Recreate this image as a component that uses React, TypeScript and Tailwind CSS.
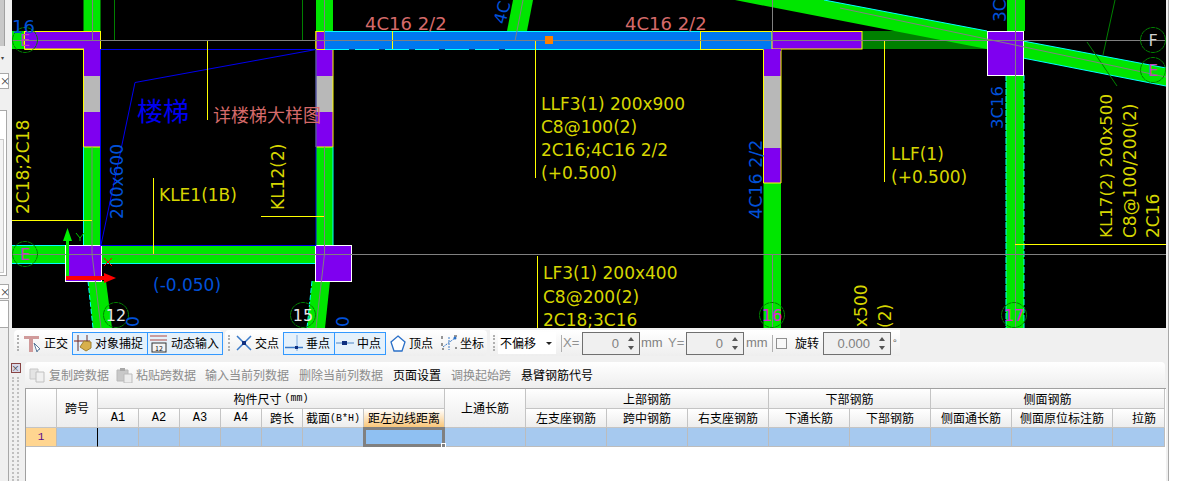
import React from "react";

const cjk = '"Noto Sans CJK SC", sans-serif';
const latin = { fontFamily: '"Liberation Sans", sans-serif' };
const mono = { fontFamily: '"Liberation Mono", "Noto Sans CJK SC", monospace' };
const YELLOW = "#d6d600";
const SALMON = "#d56a6a";
const BLUE = "#0050d8";
const GREEN = "#00e600";
const PURPLE = "#7f00f0";
const CYAN = "#00ffff";

function VText({ x, y, size = 17, fill = YELLOW, angle = -90, children }: { x: number; y: number; size?: number; fill?: string; angle?: number; children: React.ReactNode }) {
  return (
    <text x={x} y={y} fontSize={size} fill={fill} transform={`rotate(${angle} ${x} ${y})`}>
      {children}
    </text>
  );
}

function Axis({ x, y, label, color = "#c040c0" }: { x: number; y: number; label: string; color?: string }) {
  return (
    <g>
      <circle cx={x} cy={y} r="12.5" fill="none" stroke="#008000" strokeDasharray="5 0.6" />
      <text x={x} y={y + 6} fontSize="16" fill={color} textAnchor="middle">
        {label}
      </text>
    </g>
  );
}

function Drawing() {
  return (
    <svg className="block w-[1154px] h-[328px] bg-black" viewBox="12 0 1154 328" style={{ fontFamily: '"DejaVu Sans", sans-serif' }}>
      {/* diagonal beams */}
      <polygon points="862,31 987,31 987,49 862,49" fill="#008000" />
      <polygon points="735,0 824,0 987,31 987,49" fill={GREEN} />
      <polyline points="824,0 987,31" fill="none" stroke={CYAN} />
      <polygon points="1023,41 1166,68 1166,86 1023,58" fill={GREEN} />
      <polyline points="1023,41 1166,68" fill="none" stroke={CYAN} />
      <polyline points="1023,58 1166,86" fill="none" stroke={CYAN} />
      <polygon points="513,0 533,0 527,31 507,31" fill={GREEN} />
      <polygon points="88,281 106,281 112,328 93,328" fill={GREEN} />
      <polygon points="312,281 330,281 325,328 307,328" fill={GREEN} />
      <polyline points="88,281 93,328" fill="none" stroke={CYAN} strokeDasharray="5 2" />
      <polyline points="312,281 307,328" fill="none" stroke={CYAN} strokeDasharray="5 2" />

      {/* left column */}
      <rect x="83.5" y="0" width="17" height="31" fill={GREEN} />
      <rect x="83.5" y="49" width="17" height="27" fill={PURPLE} />
      <rect x="83.5" y="76" width="17" height="36" fill="#b8b8b8" />
      <rect x="83.5" y="112" width="17" height="35" fill={PURPLE} />
      <rect x="83.5" y="147" width="17" height="98" fill={GREEN} />
      {/* middle column */}
      <rect x="316" y="0" width="17" height="31" fill={GREEN} />
      <rect x="316" y="49" width="17" height="27" fill={PURPLE} />
      <rect x="316" y="76" width="17" height="36" fill="#b8b8b8" />
      <rect x="316" y="112" width="17" height="35" fill={PURPLE} />
      <rect x="316" y="147" width="17" height="98" fill={GREEN} />
      {/* right column */}
      <rect x="763.5" y="49" width="17.5" height="27" fill={PURPLE} />
      <rect x="763.5" y="76" width="17.5" height="72" fill="#b8b8b8" />
      <rect x="763.5" y="148" width="17.5" height="35" fill={PURPLE} />
      <rect x="763.5" y="183" width="17.5" height="145" fill={GREEN} />
      <line x1="763.5" y1="183" x2="781" y2="183" stroke="#ffff00" />
      <line x1="763.5" y1="49" x2="763.5" y2="183" stroke="#ffff00" />
      <line x1="781" y1="49" x2="781" y2="183" stroke="#ffff00" />
      {/* far right column */}
      <rect x="1007" y="0" width="18" height="31" fill={GREEN} />
      <rect x="1006" y="75" width="18" height="253" fill={GREEN} />
      <line x1="1006" y1="75" x2="1006" y2="328" stroke={CYAN} strokeDasharray="6 1" />
      <line x1="1024" y1="75" x2="1024" y2="328" stroke={CYAN} strokeDasharray="6 2" />
      <line x1="83.5" y1="49" x2="83.5" y2="147" stroke="#ffff00" />
      <line x1="316" y1="31" x2="316" y2="147" stroke="#ffff00" />
      <line x1="333" y1="49" x2="333" y2="147" stroke="#ffff00" />
      <line x1="83.5" y1="147" x2="100.5" y2="147" stroke="#ffff00" />
      <line x1="316" y1="147" x2="333" y2="147" stroke="#ffff00" />
      <line x1="83.5" y1="147" x2="83.5" y2="245" stroke={CYAN} />
      <line x1="333" y1="147" x2="333" y2="245" stroke={CYAN} />

      {/* top beam */}
      <rect x="12" y="31" width="13" height="18" fill={GREEN} />
      <rect x="24.5" y="31.5" width="76" height="17.5" fill={PURPLE} stroke="#ffff00" />
      <rect x="84" y="48" width="16" height="3" fill={PURPLE} />
      <line x1="84" y1="49.5" x2="24.5" y2="49.5" stroke="#ffff00" />
      <rect x="316" y="31.5" width="9" height="18" fill={PURPLE} stroke="#ffff00" />
      <rect x="325" y="31" width="447" height="18.5" fill="#0078f0" />
      <line x1="325" y1="31.5" x2="772" y2="31.5" stroke={CYAN} />
      <line x1="325" y1="49.5" x2="520" y2="49.5" stroke={CYAN} strokeDasharray="24 6" />
      <line x1="520" y1="49.5" x2="700" y2="49.5" stroke={CYAN} />
      <line x1="392.5" y1="31" x2="392.5" y2="49" stroke="#ffff00" />
      <line x1="700.5" y1="31" x2="700.5" y2="49" stroke="#ffff00" />
      <line x1="700" y1="31.5" x2="772" y2="31.5" stroke="#ffff00" />
      <line x1="700" y1="49.5" x2="763" y2="49.5" stroke="#ffff00" />
      <rect x="772" y="31.5" width="90" height="17.5" fill={PURPLE} stroke="#ffff00" />
      <rect x="764" y="49" width="17" height="2" fill={PURPLE} />

      {/* bottom beam */}
      <rect x="12" y="245" width="54" height="18" fill={GREEN} />
      <rect x="101" y="245" width="215" height="18" fill={GREEN} />
      <line x1="12" y1="245.5" x2="66" y2="245.5" stroke={CYAN} />
      <line x1="12" y1="263.5" x2="66" y2="263.5" stroke={CYAN} />
      <line x1="101" y1="263.5" x2="316" y2="263.5" stroke={CYAN} />
      <rect x="65.5" y="245.5" width="36" height="36" fill={PURPLE} stroke="#ffffff" />
      <rect x="315.5" y="245.5" width="36" height="36" fill={PURPLE} stroke="#ffffff" />
      <rect x="987.5" y="31.5" width="36" height="44" fill={PURPLE} stroke="#ffffff" />

      {/* blue outline of the stair opening */}
      <polyline points="100.5,49.5 316,49.5 316,245.5 100.5,245.5 100.5,49.5" fill="none" stroke="#0000f0" />
      <polyline points="316,49.5 135,82.5 101,245" fill="none" stroke="#0000f0" />

      {/* thin green lines */}
      <line x1="114.5" y1="0" x2="114.5" y2="40" stroke="#008000" />
      <line x1="302.5" y1="0" x2="302.5" y2="40" stroke="#008000" />
      <line x1="1115" y1="0" x2="1103" y2="55" stroke="#008000" />
      <line x1="1087" y1="42" x2="1117" y2="86" stroke="#008000" />

      {/* axis grid */}
      <line x1="12" y1="40.5" x2="1166" y2="40.5" stroke="#808080" />
      <line x1="12" y1="254.5" x2="1166" y2="254.5" stroke="#808080" />
      <line x1="772.5" y1="0" x2="772.5" y2="41" stroke="#808080" />
      <line x1="772.5" y1="254" x2="772.5" y2="328" stroke="#808080" />
      <line x1="1015.5" y1="0" x2="1015.5" y2="328" stroke="#808080" />
      <line x1="840" y1="8" x2="1166" y2="77" stroke="#808080" />
      <line x1="92.5" y1="0" x2="92.5" y2="40" stroke="#808080" />
      <line x1="92" y1="147" x2="92" y2="254" stroke="#808080" />
      <line x1="92" y1="254" x2="101" y2="328" stroke="#808080" />
      <line x1="324.5" y1="0" x2="324.5" y2="40" stroke="#808080" />
      <line x1="324.5" y1="147" x2="324.5" y2="254" stroke="#808080" />
      <line x1="324.5" y1="254" x2="316" y2="328" stroke="#808080" />
      <line x1="523" y1="0" x2="515" y2="41" stroke="#808080" />

      {/* leader lines */}
      <g stroke="#ffff00">
        <line x1="207.5" y1="41" x2="207.5" y2="120" />
        <line x1="153.5" y1="178" x2="153.5" y2="254" />
        <line x1="12" y1="220.5" x2="92" y2="220.5" />
        <line x1="261" y1="216.5" x2="324" y2="216.5" />
        <line x1="535.5" y1="41" x2="535.5" y2="178" />
        <line x1="537.5" y1="256" x2="537.5" y2="328" />
        <line x1="884.5" y1="41" x2="884.5" y2="182" />
        <line x1="1015" y1="244.5" x2="1166" y2="244.5" />
      </g>

      <rect x="545" y="36" width="8" height="8" fill="#ff8000" />

      {/* axis bubbles */}
      <Axis x={25} y={40} label="E" />
      <Axis x={25} y={254} label="E" />
      <Axis x={116} y={315} label="12" color="#e8e8e8" />
      <Axis x={303} y={315} label="15" color="#e8e8e8" />
      <Axis x={772} y={315} label="16" color="#e020e0" />
      <Axis x={1014} y={315} label="17" color="#e020e0" />
      <Axis x={1153} y={40} label="F" color="#d0d0d0" />
      <Axis x={1153} y={70} label="E" color="#c040c0" />

      {/* coordinate arrows */}
      <rect x="66" y="236" width="3" height="42" fill="#00f000" />
      <polygon points="67.5,228 63,241 72,241" fill="#00f000" />
      <rect x="66" y="276" width="40" height="4" fill="#ff0000" />
      <polygon points="116,278 104,273 104,283" fill="#ff0000" />
      <path d="M76 233 L80 238 L84 233 M80 238 L80 241" fill="none" stroke="#00c000" />
      <path d="M104 258 L112 266 M112 258 L104 266" fill="none" stroke="#ff0000" />

      {/* labels */}
      <text x="12" y="33" fontSize="18" fill={BLUE}>16</text>
      <text x="365" y="29.5" fontSize="18" fill={SALMON}>4C16 2/2</text>
      <text x="625" y="29.5" fontSize="18" fill={SALMON}>4C16 2/2</text>
      <text x="137" y="121" fontSize="26" fill="#0000f0" style={{ fontFamily: cjk }}>楼梯</text>
      <text x="213" y="122" fontSize="18" fill={SALMON} style={{ fontFamily: cjk }}>详楼梯大样图</text>
      <text x="159" y="201" fontSize="17" fill={YELLOW}>KLE1(1B)</text>
      <text x="153" y="291" fontSize="17" fill={BLUE}>(-0.050)</text>
      <text x="541" y="110" fontSize="17" fill={YELLOW}>LLF3(1) 200x900</text>
      <text x="541" y="133" fontSize="17" fill={YELLOW}>C8@100(2)</text>
      <text x="541" y="156" fontSize="17" fill={YELLOW}>2C16;4C16 2/2</text>
      <text x="541" y="179" fontSize="17" fill={YELLOW}>(+0.500)</text>
      <text x="543" y="279" fontSize="17" fill={YELLOW}>LF3(1) 200x400</text>
      <text x="543" y="303" fontSize="17" fill={YELLOW}>C8@200(2)</text>
      <text x="543" y="326" fontSize="17" fill={YELLOW}>2C18;3C16</text>
      <text x="891" y="160" fontSize="17" fill={YELLOW}>LLF(1)</text>
      <text x="891" y="183" fontSize="17" fill={YELLOW}>(+0.500)</text>

      <VText x={29} y={214}>2C18;2C18</VText>
      <VText x={123} y={219} fill={BLUE}>200x600</VText>
      <VText x={284} y={210}>KL12(2)</VText>
      <VText x={762} y={219} size={17.5} fill={BLUE}>4C16 2/2</VText>
      <VText x={1003} y={129} size={16.5} fill={BLUE}>3C16</VText>
      <VText x={1006} y={22} fill={BLUE}>3C</VText>
      <VText x={505} y={25} fill={BLUE} angle={-75}>4C</VText>
      <VText x={139} y={327} fill={BLUE}>0</VText>
      <VText x={349} y={327} fill={BLUE}>0</VText>
      <VText x={1112} y={238} size={16.7}>KL17(2) 200x500</VText>
      <VText x={1136} y={238}>C8@100/200(2)</VText>
      <VText x={1159} y={238}>2C16</VText>
      <VText x={867} y={327}>x500</VText>
      <VText x={891} y={328}>(2)</VText>
    </svg>
  );
}

function LeftStrip() {
  return (
    <div className="w-[12px] h-full flex flex-col bg-[#f0f0f0] overflow-hidden">
      <div className="h-[46px] w-[5px] bg-[#c8c8c8] border-r border-[#a0a0a0]" />
      <div className="mt-[9px] ml-[1px] text-[6px] leading-[6px] text-[#444]">▾</div>
      <div className="mt-[12px] h-[16px] w-[9px] bg-white border border-l-0 border-[#a8a8a8] text-[10px] leading-[14px] text-[#333]">×</div>
      <div className="mt-[21px] h-[166px] w-[7px] bg-white border border-l-0 border-[#a8a8a8]">
        <div className="mt-[28px] h-[134px] w-[4px] border border-l-0 border-[#c8c8c8] bg-[#f4f4f4]" />
      </div>
      <div className="mt-[8px] h-[15px] w-[9px] bg-white border border-l-0 border-[#a8a8a8] text-[10px] leading-[13px] text-[#333]">×</div>
      <div className="mt-[1px] flex-1 w-[9px] bg-white border border-l-0 border-[#a8a8a8]" />
    </div>
  );
}

function Grip() {
  return <div className="shrink-0 w-[2px] h-[16px] mx-[3px] border-l-2 border-dotted border-[#b0b0b0]" />;
}

function OrthoIcon() {
  return (
    <svg width="20" height="18" viewBox="0 0 20 18">
      <path d="M1 2h15v3H1zM6 5h4v13H6z" fill="#d09a9a" />
      <path d="M11 9l6 6-2 1-1 2z" fill="#fff" stroke="#5a7a9a" />
    </svg>
  );
}

function SnapIcon() {
  return (
    <svg width="20" height="20" viewBox="0 0 20 20">
      <path d="M1 8h16" stroke="#a06060" strokeWidth="1.5" />
      <path d="M5 2v16M14 2v8" stroke="#603030" />
      <path d="M7 14l4-6 7 1 0 6-5 3z" fill="#d8b04c" stroke="#a08030" />
    </svg>
  );
}

function DynIcon() {
  return (
    <svg width="20" height="20" viewBox="0 0 20 20">
      <path d="M1 3h17M1 7h17" stroke="#c08080" strokeWidth="1.5" />
      <rect x="3" y="10" width="14" height="9" fill="#f4f4f4" stroke="#333" />
      <text x="10" y="18" fontSize="7" textAnchor="middle" fill="#111">12</text>
    </svg>
  );
}

function CrossIcon() {
  return (
    <svg width="18" height="18" viewBox="0 0 18 18">
      <path d="M2 2l14 14M16 2L2 16" stroke="#3a7ac8" strokeWidth="1.5" />
      <rect x="7" y="7" width="4" height="4" fill="#103080" />
    </svg>
  );
}

function PerpIcon() {
  return (
    <svg width="20" height="18" viewBox="0 0 20 18">
      <path d="M1 13.5h18" stroke="#3a7ac8" strokeWidth="1.5" />
      <path d="M13 1v16" stroke="#9cc0e8" strokeWidth="1.5" />
      <rect x="11" y="12" width="3" height="3" fill="#103080" />
    </svg>
  );
}

function MidIcon() {
  return (
    <svg width="20" height="18" viewBox="0 0 20 18">
      <path d="M1 9h18" stroke="#7ea8d8" strokeWidth="1.5" />
      <rect x="7" y="7" width="5" height="4" fill="#103080" />
    </svg>
  );
}

function VertexIcon() {
  return (
    <svg width="16" height="17" viewBox="0 0 16 17">
      <path d="M8 1l7 6-3 9H4L1 7z" fill="#fff" stroke="#2a70c8" strokeWidth="1.3" />
    </svg>
  );
}

function CoordIcon() {
  return (
    <svg width="18" height="18" viewBox="0 0 18 18">
      <path d="M9 3v13M3 13l12-9" stroke="#3a7ac8" strokeDasharray="2 1" />
      <path d="M2 2v3M2 9v3M2 15h2M14 2h3M15 14h2" stroke="#333" />
      <circle cx="15" cy="4" r="1.5" fill="#2a70c8" />
    </svg>
  );
}

function Spin({ value, className }: { value: string; className: string }) {
  return (
    <div className={`shrink-0 h-[23px] mt-[1px] bg-[#f0f0f0] border border-[#707070] flex items-center justify-end ${className}`}>
      <span className="text-[13px] text-[#808080]" style={latin}>{value}</span>
      <div className="w-[17px] flex flex-col items-center gap-[5px] ml-[3px]">
        <div className="w-0 h-0 border-x-[3px] border-x-transparent border-b-[4px] border-b-[#555]" />
        <div className="w-0 h-0 border-x-[3px] border-x-transparent border-t-[4px] border-t-[#555]" />
      </div>
    </div>
  );
}

function Toggled({ icon, label, className }: { icon: React.ReactNode; label: string; className: string }) {
  return (
    <div className={`shrink-0 h-[23px] flex items-center gap-[2px] bg-[#e5f1fb] border border-[#3399ff] whitespace-nowrap ${className}`}>
      <span className="shrink-0 flex">{icon}</span>
      <span>{label}</span>
    </div>
  );
}

function MainToolbar() {
  return (
    <div className="h-[34px] flex items-start pt-[2px] pl-[5px] text-[12px] leading-[16px] text-black whitespace-nowrap">
      <div className="h-[26px] w-[208px] flex items-center rounded-sm bg-gradient-to-b from-white to-[#eeeeee]">
        <Grip />
        <div className="ml-[1px] w-[20px] shrink-0 flex"><OrthoIcon /></div>
        <span className="ml-[1px] w-[28px] shrink-0">正交</span>
        <Toggled icon={<SnapIcon />} label="对象捕捉" className="w-[76px]" />
        <Toggled icon={<DynIcon />} label="动态输入" className="w-[76px] -ml-[1px] pl-[1px]" />
      </div>
      <div className="h-[26px] w-[262px] ml-[3px] flex items-center rounded-sm bg-gradient-to-b from-white to-[#eeeeee]">
        <Grip />
        <div className="ml-[2px] shrink-0 flex"><CrossIcon /></div>
        <span className="ml-[2px] w-[28px] shrink-0">交点</span>
        <Toggled icon={<PerpIcon />} label="垂点" className="w-[52px]" />
        <Toggled icon={<MidIcon />} label="中点" className="w-[52px] -ml-[1px]" />
        <div className="ml-[4px] shrink-0 flex"><VertexIcon /></div>
        <span className="ml-[3px] w-[31px] shrink-0">顶点</span>
        <CoordIcon />
        <span className="ml-[2px]">坐标</span>
      </div>
      <div className="h-[26px] w-[410px] ml-[3px] flex items-center bg-gradient-to-b from-white to-[#eeeeee]">
        <Grip />
        <div className="shrink-0 w-[58px] h-[22px] bg-white flex items-center pl-[2px]">
          <span className="w-[44px]">不偏移</span>
          <div className="ml-[2px] w-0 h-0 border-x-[3px] border-x-transparent border-t-[3px] border-t-[#222]" />
        </div>
        <div className="w-px h-[17px] ml-[5px] bg-[#b0b0b0]" />
        <span className="ml-[1px] w-[19px] shrink-0 text-[13px] text-[#909090]" style={latin}>X=</span>
        <Spin value="0" className="w-[58px]" />
        <span className="ml-[1px] w-[27px] shrink-0 text-[13px] text-[#808080]" style={latin}>mm</span>
        <span className="w-[18px] shrink-0 text-[13px] text-[#909090]" style={latin}>Y=</span>
        <Spin value="0" className="w-[58px]" />
        <span className="ml-[2px] w-[26px] shrink-0 text-[13px] text-[#808080]" style={latin}>mm</span>
        <div className="w-px h-[17px] bg-[#b0b0b0]" />
        <div className="ml-[3px] w-[11px] h-[11px] border border-[#909090] bg-[#f8f8f8]" />
        <span className="ml-[8px] w-[28px] shrink-0">旋转</span>
        <Spin value="0.000" className="w-[68px]" />
        <span className="ml-[2px] text-[#666] text-[10px]">°</span>
      </div>
    </div>
  );
}

function CopyIcon() {
  return (
    <svg width="18" height="15" viewBox="0 0 18 15">
      <path d="M1 1h8v10H1z" fill="#e4e4e4" stroke="#c8c8c8" />
      <path d="M7 4h8v10H7z" fill="#f0f0f0" stroke="#c0c0c0" />
    </svg>
  );
}

function PasteIcon() {
  return (
    <svg width="18" height="15" viewBox="0 0 18 15">
      <path d="M1 2h11v11H1z" fill="#c8c8c8" stroke="#b8b8b8" />
      <path d="M4 0h5v3H4z" fill="#a8a8a8" />
      <path d="M8 6h8v9H8z" fill="#ececec" stroke="#bbb" />
    </svg>
  );
}

function DataToolbar() {
  return (
    <div className="h-[26px] w-[1140px] flex items-center rounded-t bg-gradient-to-b from-white to-[#eeeeee] text-[12px] text-[#8c8c8c]">
      <div className="ml-[4px] w-[18px] flex"><CopyIcon /></div>
      <span className="ml-[2px] w-[60px] whitespace-nowrap">复制跨数据</span>
      <div className="ml-[7px] w-[18px] flex"><PasteIcon /></div>
      <span className="ml-[2px] w-[60px] whitespace-nowrap">粘贴跨数据</span>
      <span className="ml-[9px] w-[84px] whitespace-nowrap">输入当前列数据</span>
      <span className="ml-[10px] w-[84px] whitespace-nowrap">删除当前列数据</span>
      <span className="ml-[10px] w-[48px] whitespace-nowrap text-black">页面设置</span>
      <span className="ml-[10px] w-[60px] whitespace-nowrap">调换起始跨</span>
      <span className="ml-[10px] whitespace-nowrap text-black">悬臂钢筋代号</span>
    </div>
  );
}

const head = "flex items-center justify-center whitespace-nowrap border-r border-b border-[#c4c4c4] bg-gradient-to-b from-white to-[#ededed] text-[12px] text-black";
const body = "border-r border-b border-[#bcbcbc] bg-[#a6c9ef]";

function SpanTable() {
  const subCols = ["A1", "A2", "A3", "A4"];
  const rebarCols = ["左支座钢筋", "跨中钢筋", "右支座钢筋", "下通长筋", "下部钢筋", "侧面通长筋", "侧面原位标注筋"];
  return (
    <div className="relative w-[1141px] flex-1 bg-white border-l border-t border-[#a0a0a0]">
      <div className="grid grid-cols-[31px_41px_41px_41px_41px_41px_41px_61px_81px_81px_81px_81px_81px_81px_81px_81px_101px_52px] grid-rows-[20px_19px_19px]">
        <div className={`${head} row-span-2`} />
        <div className={`${head} row-span-2`}>跨号</div>
        <div className={`${head} col-span-7`}>
          构件尺寸 <span className="ml-[3px] text-[10px]" style={mono}>(mm)</span>
        </div>
        <div className={`${head} row-span-2`}>上通长筋</div>
        <div className={`${head} col-span-3`}>上部钢筋</div>
        <div className={`${head} col-span-2`}>下部钢筋</div>
        <div className={`${head} col-span-3`}>侧面钢筋</div>

        {subCols.map((c) => (
          <div key={c} className={head} style={mono}>{c}</div>
        ))}
        <div className={head}>跨长</div>
        <div className={head}>截面 <span className="text-[10px]" style={mono}>(B*H)</span></div>
        <div className={`${head} from-[#ffe4a8] to-[#f8c678] text-[#5a0a8a]`}>距左边线距离</div>
        {rebarCols.map((c) => (
          <div key={c} className={head}>{c}</div>
        ))}
        <div className={`${head} justify-end pr-[8px]`}>拉筋</div>

        <div className="flex items-center justify-center border-r border-b border-[#bcbcbc] bg-[#ffd590] text-[11px] text-[#5a0a8a]" style={mono}>1</div>
        <div className={`${body} border-r-black`} />
        {Array.from({ length: 6 }).map((_, i) => (
          <div key={i} className={body} />
        ))}
        <div className="relative bg-[#8fc0f2] border-[3px] border-[#808080] -mt-px -ml-px h-[20px]">
          <div className="absolute -right-[4px] -bottom-[4px] w-[5px] h-[5px] bg-[#808080] border border-white" />
        </div>
        {Array.from({ length: 9 }).map((_, i) => (
          <div key={i} className={body} />
        ))}
      </div>
    </div>
  );
}

export default function App() {
  return (
    <div className="w-[1181px] h-[481px] bg-white overflow-hidden" style={{ fontFamily: cjk }}>
      <div className="w-[1169px] h-full flex flex-col bg-[#f0f0f0] border-r border-[#a8a8a8]">
        <div className="h-[328px] flex shrink-0">
          <LeftStrip />
          <Drawing />
        </div>
        <div className="flex-1 flex relative min-h-0">
          <div className="w-[9px] border-r border-[#a8a8a8]" />
          <div className="flex-1 flex flex-col min-w-0">
            <MainToolbar />
            <div className="flex-1 flex min-h-0">
              <div className="w-[16px] flex flex-col items-center pt-[1px] pr-[3px]">
                <div className="w-[10px] h-[10px] border border-[#884444] bg-[#d8d8e8] text-[8px] leading-[8px] text-center text-[#333]">×</div>
                <div className="mt-[4px] w-[7px] flex-1 border-x-2 border-dotted border-[#c0c0c0]" />
              </div>
              <div className="flex flex-col">
                <DataToolbar />
                <SpanTable />
              </div>
            </div>
          </div>
        </div>
      </div>
    </div>
  );
}
